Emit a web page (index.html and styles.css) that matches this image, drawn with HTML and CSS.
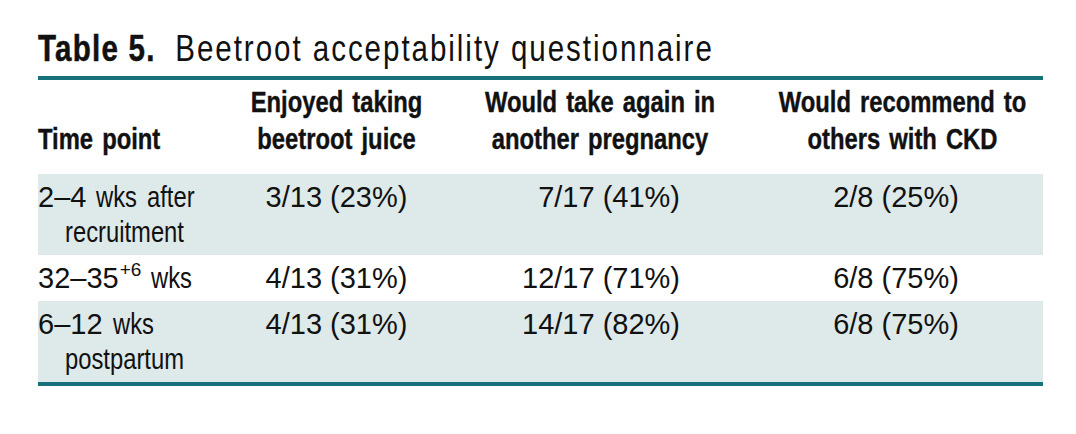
FILE: index.html
```html
<!DOCTYPE html>
<html lang="en">
<head>
<meta charset="utf-8">
<title>Table 5. Beetroot acceptability questionnaire</title>
<link rel="stylesheet" href="styles.css">
</head>
<body>
<div class="page">
  <h1 class="caption"><span class="cap-inner"><span class="label">Table 5.</span><span class="title">Beetroot acceptability questionnaire</span></span></h1>
  <table class="data">
    <colgroup>
      <col class="c1"><col class="c2"><col class="c3"><col class="c4">
    </colgroup>
    <thead>
      <tr>
        <th class="h-first"><div class="hd hd-left"><span>Time point</span></div></th>
        <th><div class="hd"><span>Enjoyed taking</span><span>beetroot juice</span></div></th>
        <th><div class="hd"><span>Would take again in</span><span>another pregnancy</span></div></th>
        <th><div class="hd"><span>Would recommend to</span><span>others with CKD</span></div></th>
      </tr>
    </thead>
    <tbody>
      <tr class="shade">
        <td class="tp">2–4 <span class="w mid">wks</span> <span class="w">after</span> <span class="w">recruitment</span></td>
        <td class="v2">3/13 (23%)</td>
        <td class="v3">7/17 (41%)</td>
        <td class="v4">2/8 (25%)</td>
      </tr>
      <tr>
        <td class="tp">32–35<sup class="sup">+6</sup> <span class="w">wks</span></td>
        <td class="v2">4/13 (31%)</td>
        <td class="v3">12/17 (71%)</td>
        <td class="v4">6/8 (75%)</td>
      </tr>
      <tr class="shade">
        <td class="tp">6–12 <span class="w mid">wks</span> <span class="w">postpartum</span></td>
        <td class="v2">4/13 (31%)</td>
        <td class="v3">14/17 (82%)</td>
        <td class="v4">6/8 (75%)</td>
      </tr>
    </tbody>
  </table>
</div>
</body>
</html>
```

FILE: styles.css
```css
html, body {
  margin: 0;
  padding: 0;
  background: #ffffff;
}

.page {
  padding: 26px 33px 0 38px;
  color: #111111;
  font-family: "Liberation Sans", Arial, sans-serif;
}

.caption {
  margin: 0 0 5px 0;
  font-size: 36px;
  line-height: 45px;
  font-weight: normal;
  white-space: nowrap;
}

.cap-inner {
  display: inline-block;
  transform: scaleX(0.82);
  transform-origin: left center;
}

.label {
  font-weight: bold;
  letter-spacing: 1.5px;
  -webkit-text-stroke: 0.5px #111111;
}

.title {
  letter-spacing: 2.4px;
  margin-left: 24px;
}

.data {
  width: 1005px;
  border-collapse: collapse;
  border-top: 4px solid #17717a;
  border-bottom: 4px solid #17717a;
  table-layout: fixed;
}

.c1 { width: 197px; }
.c2 { width: 203px; }
.c3 { width: 324px; }
.c4 { width: 281px; }

.data th {
  font-weight: bold;
  font-size: 29px;
  line-height: 37px;
  vertical-align: bottom;
  padding: 4px 0 16px 0;
  white-space: nowrap;
}

.hd {
  display: flex;
  flex-direction: column;
  align-items: center;
  transform: scaleX(0.82);
  transform-origin: center center;
  word-spacing: 3px;
  -webkit-text-stroke: 0.4px #111111;
}

.hd-left {
  align-items: flex-start;
  transform-origin: left center;
}

.data td {
  font-size: 29px;
  line-height: 35px;
  padding: 6px 0 5px 0;
  vertical-align: top;
}

.shade td {
  background: #dee9e9;
}

.tp {
  text-align: left;
  padding-left: 27px !important;
  text-indent: -27px;
  word-spacing: 2px;
}

.w {
  display: inline-block;
  text-indent: 0;
  transform: scaleX(0.82);
  transform-origin: left center;
}

.w.mid {
  margin-right: -9px;
}

.v2 {
  text-align: center;
}

.v3 {
  text-align: right;
  padding-right: 82px !important;
}

.v4 {
  text-align: center;
  padding-right: 13px !important;
}

.sup {
  font-size: 19px;
  line-height: 0;
  vertical-align: 12px;
  margin-left: 1px;
}
```
